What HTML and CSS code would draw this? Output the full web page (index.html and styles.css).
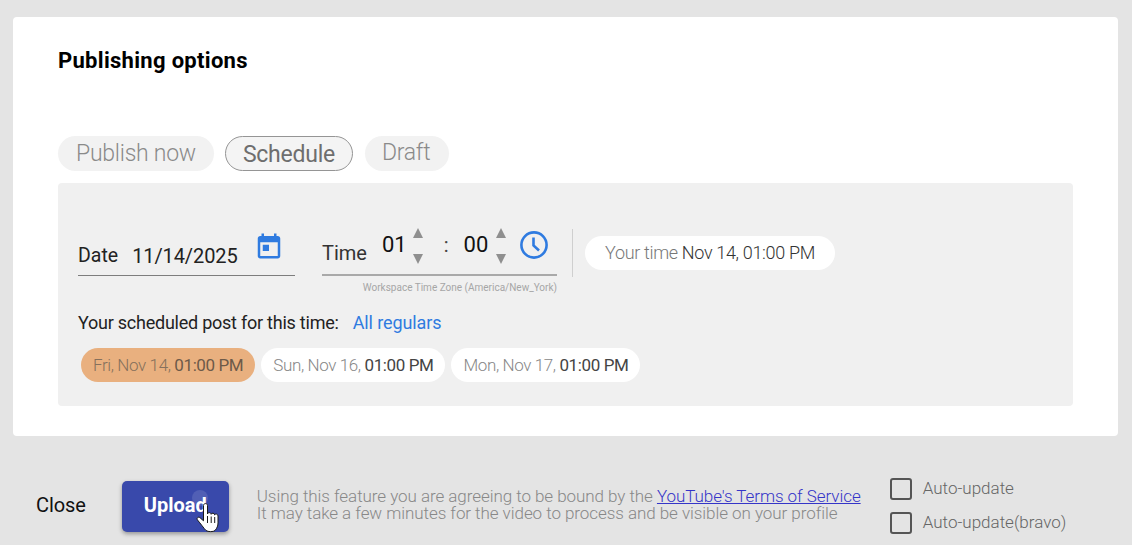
FILE: index.html
```html
<!DOCTYPE html>
<html lang="en">
<head>
<meta charset="utf-8">
<title>Publishing options</title>
<link rel="stylesheet" href="styles.css">
</head>
<body>
<main class="card">
  <h1 class="title">Publishing options</h1>
  <div class="modes">
    <span class="mode">Publish now</span>
    <span class="mode mode-active">Schedule</span>
    <span class="mode mode-draft">Draft</span>
  </div>
  <section class="panel">
    <div class="when">
      <div class="date-field">
        <span class="field-label">Date</span>
        <span class="date-value">11/14/2025</span>
        <svg class="cal-icon" viewBox="0 0 24 24" width="30" height="30"><path fill="#2f7be0" d="M19 4h-1V2h-2v2H8V2H6v2H5c-1.100 0-2 .9-2 2v14c0 1.100.9 2 2 2h14c1.100 0 2-.9 2-2V6c0-1.100-.9-2-2-2zm0 16H5V9h14v11zM7 11h5v5H7z"/></svg>
      </div>
      <div class="time-wrap">
        <div class="time-field">
          <span class="time-label">Time</span>
          <span class="time-num">01</span>
          <span class="spin"><i class="up"></i><i class="down"></i></span>
          <span class="colon">:</span>
          <span class="time-num">00</span>
          <span class="spin"><i class="up"></i><i class="down"></i></span>
          <svg class="clock-icon" viewBox="0 0 30 30" width="30" height="30"><circle cx="15" cy="15" r="12.600" fill="none" stroke="#2f7be0" stroke-width="2.600"/><path d="M14.500 7.500V15.500L20 20.500" fill="none" stroke="#2f7be0" stroke-width="2.600"/></svg>
        </div>
        <div class="zone">Workspace Time Zone (America/New_York)</div>
      </div>
      <span class="divider"></span>
      <span class="your-time"><span class="muted">Your time</span> Nov 14, 01:00 PM</span>
    </div>
    <div class="regular-row">
      <span>Your scheduled post for this time:</span>
      <a class="regular-link" href="#">All regulars</a>
    </div>
    <div class="slots">
      <span class="slot slot-on">Fri, Nov 14, <b>01:00 PM</b></span>
      <span class="slot">Sun, Nov 16, <b>01:00 PM</b></span>
      <span class="slot">Mon, Nov 17, <b>01:00 PM</b></span>
    </div>
  </section>
</main>
<footer class="footer">
  <span class="close">Close</span>
  <div class="upload">
    <span class="upload-text">Upload</span>
    <span class="pointer-halo"></span>
    <svg class="pointer" viewBox="0 0 24 32" width="24" height="32"><path d="M7.500 3.500c0-2.600 4-2.600 4 0v8.500c.3-1.900 3.500-1.800 3.700.3.3-1.700 3.300-1.500 3.500.6.500-1.400 3.300-1 3.300 1v7c0 3-1 5.200-3 7.600-1.500 1.500-7 1.500-9 0-2-2-5.500-7-8.500-10.500-1.400-2 1-3.800 2.700-2.100l3.300 2.900z" fill="#fff" stroke="#1a1a1a" stroke-width="1" stroke-linejoin="round"/><path d="M11.500 14v7M15.200 14.500v6.500M18.700 15v6" stroke="#1a1a1a" stroke-width="1" fill="none"/></svg>
  </div>
  <div class="notice">
    <div>Using this feature you are agreeing to be bound by the <a class="tos" href="#">YouTube's Terms of Service</a></div>
    <div>It may take a few minutes for the video to process and be visible on your profile</div>
  </div>
  <div class="checks">
    <label class="check"><span class="box"></span>Auto-update</label>
    <label class="check"><span class="box"></span>Auto-update(bravo)</label>
  </div>
</footer>
</body>
</html>
```
FILE: styles.css
```css
* { box-sizing: border-box; }
html, body { margin: 0; height: 545px; overflow: hidden; }
body { background: #e4e4e4; font-family: Roboto, "Liberation Sans", sans-serif; color: #111; padding: 17px 14px 0 13px; }
.card { height: 419px; background: #fff; border-radius: 4px; padding: 31px 45px 0; }
.title { margin: 0; font-size: 22px; line-height: 26px; font-weight: 700; letter-spacing: .3px; color: #000; }
.modes { display: flex; gap: 11px; margin-top: 62px; }
.mode { height: 35px; padding: 0 18px; border-radius: 18px; background: #f2f2f2; color: #8a8a8a; font-size: 23px; letter-spacing: -.25px; font-weight: 300; line-height: 36px; }
.mode-active { background: #f4f4f4; border: 1px solid #959595; color: #6e6e6e; font-weight: 400; padding: 0 17px; line-height: 35px; }
.mode-draft { line-height: 33px; margin-left: 1px; padding: 0 19px 0 17px; }
.panel { height: 223px; margin-top: 12px; background: #f0f0f0; border-radius: 4px; padding: 45px 20px 0; }
.when { display: flex; align-items: flex-start; }
.date-field { width: 217px; height: 48px; border-bottom: 1px solid #7d7d7d; display: flex; align-items: flex-start; }
.field-label { font-size: 19.500px; line-height: 24px; margin-top: 16px; color: #222; }
.date-value { font-size: 20px; letter-spacing: -.1px; line-height: 24px; margin: 16px 0 0 14px; color: #222; }
.cal-icon { margin: 3px 0 0 16px; }
.time-wrap { margin-left: 27px; width: 235px; }
.time-field { height: 48px; border-bottom: 2px solid #a9a9a9; display: flex; align-items: flex-start; }
.time-label { font-size: 20px; line-height: 24px; margin: 13px 0 0; color: #333; }
.time-num { font-size: 22px; line-height: 26px; margin: 4px 0 0 16px; color: #111; }
.time-label + .time-num { margin-left: 15px; }
.spin { display: flex; flex-direction: column; gap: 16px; margin: 0 0 0 6px; }
.spin i { display: block; width: 0; height: 0; border-left: 5.500px solid transparent; border-right: 5.500px solid transparent; }
.spin .up { border-bottom: 10px solid #8f8f8f; }
.spin .down { border-top: 10px solid #8f8f8f; }
.colon { font-size: 20px; line-height: 24px; margin: 5px 0 0 21px; color: #444; }
.colon + .time-num { margin: 4px 2px 0 15px; }
.clock-icon { margin: 2px 0 0 13px; }
.zone { font-size: 10px; line-height: 12px; margin-top: 6px; color: #a6a6a6; text-align: right; font-weight: 400; white-space: nowrap; }
.divider { width: 1px; height: 48px; margin: 1px 0 0 15px; background: #cfcfcf; }
.your-time { height: 34px; margin: 8px 0 0 12px; padding: 0 20px; background: #fff; border-radius: 17px; font-size: 18px; letter-spacing: -.33px; line-height: 34px; color: #333; font-weight: 300; white-space: nowrap; }
.muted { color: #777; }
.regular-row { display: flex; gap: 14px; margin-top: 17px; font-size: 18px; letter-spacing: -.24px; line-height: 24px; color: #222; }
.regular-link { color: #2f7be0; text-decoration: none; letter-spacing: -.1px; }
.slots { display: flex; gap: 6px; margin: 13px 0 0 3px; }
.slot { height: 34px; padding: 0 12px; background: #fff; border-radius: 17px; font-size: 17px; letter-spacing: -.39px; line-height: 34px; color: #888; font-weight: 300; white-space: nowrap; }
.slot b { font-weight: 400; color: #444; }
.slot-on { background: #e9b07f; color: #86705c; }
.slot-on b { color: #6d5a49; }
.footer { display: flex; align-items: flex-start; height: 109px; }
.close { font-size: 20px; letter-spacing: -.1px; line-height: 24px; margin: 57px 0 0 23px; color: #111; }
.upload { position: relative; width: 107px; height: 51px; margin: 45px 0 0 36px; background: #3949ab; border-radius: 5px; box-shadow: 0 2px 4px rgba(0,0,0,.35); color: #fff; font-size: 20px; font-weight: 700; line-height: 49px; text-align: center; }
.pointer-halo { position: absolute; left: 70px; top: 9px; width: 16px; height: 16px; border-radius: 50%; background: rgba(255,255,255,.12); }
.pointer { position: absolute; left: 74px; top: 21px; }
.notice { margin: 52px 0 0 28px; width: 633px; font-size: 17px; letter-spacing: -.06px; line-height: 17px; font-weight: 300; color: #888; white-space: nowrap; }
.tos { color: #3535c8; text-decoration: underline; }
.checks { display: flex; flex-direction: column; gap: 11px; margin-top: 41px; }
.check { display: flex; align-items: center; gap: 11px; font-size: 17px; line-height: 23px; font-weight: 300; color: #666; white-space: nowrap; }
.box { width: 22px; height: 22px; border: 2px solid #555; border-radius: 3px; }
```
